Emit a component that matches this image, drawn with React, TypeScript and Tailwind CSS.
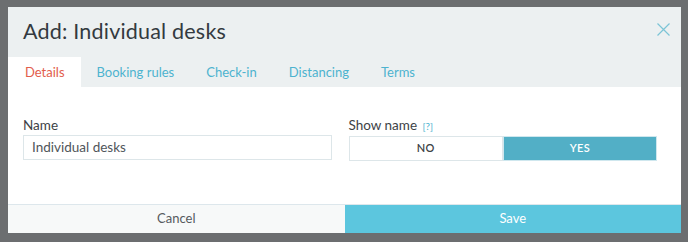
const tabs = ["Details", "Booking rules", "Check-in", "Distancing", "Terms"];

export default function App() {
  return (
    <div
      className="w-[688px] h-[242px] bg-[#6c6e70] pt-[7px] pl-[8px] pr-[7px] pb-[9px]"
      style={{ fontFamily: "Lato, 'Open Sans', sans-serif" }}
    >
      <div className="h-full bg-white flex flex-col">
        {/* Header */}
        <div className="h-[50px] bg-[#ecf0f1] flex items-center justify-between pl-[15px] pr-[11px]">
          <h2 className="text-[21.5px] text-[#333a40] leading-none tracking-[0.2px]">Add: Individual desks</h2>
          <svg width="13" height="13" viewBox="0 0 13 13" className="-mt-[6px]">
            <path d="M0.5 0.5 L12.5 12.5 M12.5 0.5 L0.5 12.5" stroke="#7cc4d6" strokeWidth="1.2" fill="none" />
          </svg>
        </div>

        {/* Tabs */}
        <div className="h-[30px] bg-[#ecf0f1] flex">
          {tabs.map((t, i) => (
            <div
              key={t}
              className={`flex items-center text-[13px] pt-[2px] ${
                i === 0 ? "bg-white text-[#e25d4c] pl-[17px] pr-4" : "text-[#4db3cf] px-4"
              }`}
            >
              {t}
            </div>
          ))}
        </div>

        {/* Body */}
        <div className="flex-1 grid grid-cols-2 gap-[17px] pl-[15px] pr-[24px] pt-[29px]">
          <div>
            <div className="text-[13.5px] text-[#3d4246] leading-[19px]">Name</div>
            <div className="h-[25px] border border-[#dde6e9] flex items-center px-[8px] text-[13.5px] text-[#50555a]">
              Individual desks
            </div>
          </div>
          <div>
            <div className="text-[13.5px] text-[#3d4246] leading-[19px]">
              Show name <span className="text-[10px] text-[#4db3cf] ml-[2px]">[?]</span>
            </div>
            <div className="h-[25px] flex text-[11px] font-semibold tracking-wide">
              <div className="flex-1 border border-[#dde6e9] flex items-center justify-center text-[#3d4246]">
                NO
              </div>
              <div className="flex-1 border border-[#cfe7ee] bg-[#52afc6] flex items-center justify-center text-white">
                YES
              </div>
            </div>
          </div>
        </div>

        {/* Footer */}
        <div className="h-[29px] border-t border-[#dde7ec] flex text-[13px]">
          <div className="flex-1 bg-[#f7f9f9] flex items-center justify-center text-[#555a5e]">Cancel</div>
          <div className="flex-1 bg-[#5cc6de] flex items-center justify-center text-white">Save</div>
        </div>
      </div>
    </div>
  );
}
